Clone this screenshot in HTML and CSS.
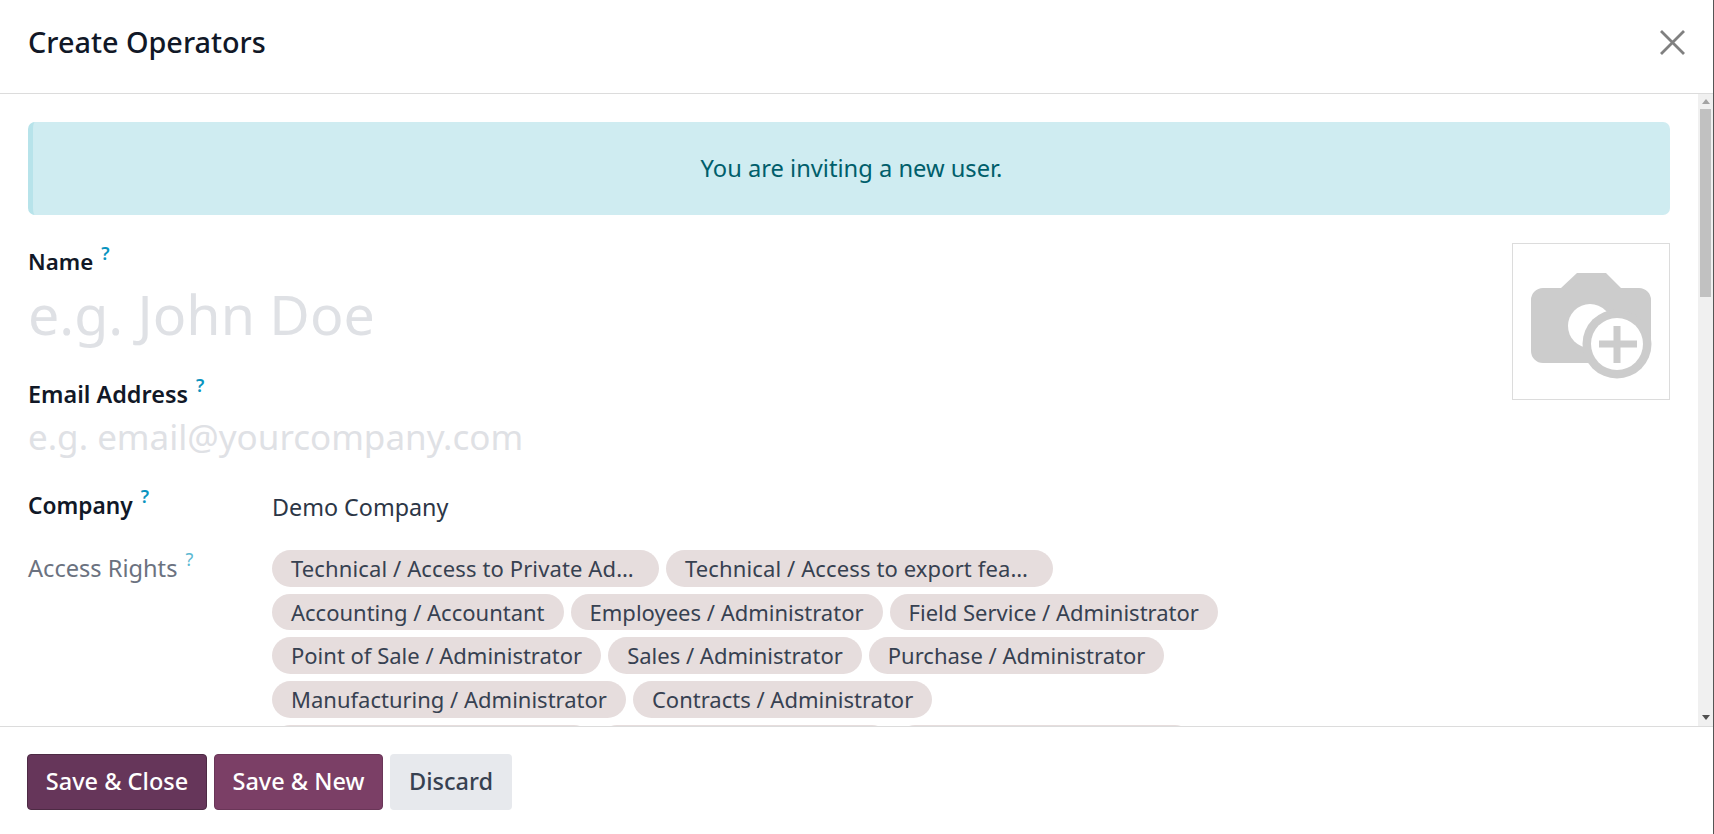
FILE: index.html
```html
<!DOCTYPE html>
<html lang="en">
<head>
<meta charset="utf-8">
<title>Create Operators</title>
<link rel="stylesheet" href="styles.css">
</head>
<body>
<div class="modal">
  <header class="modal-header">
    <h1 class="modal-title">Create Operators</h1>
    <svg class="close-icon" viewBox="0 0 25 25" aria-label="Close"><path d="M1 1L24 24M24 1L1 24"/></svg>
  </header>
  <div class="modal-middle">
    <main class="modal-body">
      <div class="alert">You are inviting a new user.</div>
      <div class="top-form">
        <div class="top-fields">
          <label class="label label-name">Name<sup class="help">?</sup></label>
          <div class="placeholder-name">e.g. John Doe</div>
          <label class="label label-email">Email Address<sup class="help">?</sup></label>
          <div class="placeholder-email">e.g. email@yourcompany.com</div>
        </div>
        <div class="image-box">
          <svg class="camera" viewBox="1513 244 156 154">
            <path class="cam-fill" d="M1531 300a12 12 0 0 1 12-12H1561L1577 273H1606L1621 288H1639a12 12 0 0 1 12 12V344H1600V363H1543a12 12 0 0 1-12-12Z"/>
            <circle class="cam-white" cx="1590" cy="326" r="22"/>
            <circle class="cam-fill" cx="1617" cy="344" r="34.5"/>
            <circle class="cam-white" cx="1617" cy="344" r="26"/>
            <path class="cam-fill" d="M1613.5 326h7v14.5H1637v7h-16.5V363h-7V347.500H1599v-7h14.500Z"/>
          </svg>
        </div>
      </div>
      <div class="row row-company">
        <label class="label row-label label-company">Company<sup class="help">?</sup></label>
        <div class="value">Demo Company</div>
      </div>
      <div class="row row-access">
        <label class="row-label label-muted">Access Rights<sup class="help help-muted">?</sup></label>
        <div class="chips">
          <span class="chip chip-long">Technical / Access to Private Ad…</span>
          <span class="chip chip-long">Technical / Access to export fea…</span>
          <span class="chip">Accounting / Accountant</span>
          <span class="chip">Employees / Administrator</span>
          <span class="chip">Field Service / Administrator</span>
          <span class="chip">Point of Sale / Administrator</span>
          <span class="chip">Sales / Administrator</span>
          <span class="chip">Purchase / Administrator</span>
          <span class="chip">Manufacturing / Administrator</span>
          <span class="chip">Contracts / Administrator</span>
          <span class="chip chip-blank-a"></span>
          <span class="chip chip-blank-b"></span>
          <span class="chip chip-blank-c"></span>
        </div>
      </div>
    </main>
    <div class="scrollbar" aria-hidden="true">
      <span class="arrow-up"></span>
      <span class="thumb"></span>
      <span class="track-rest"></span>
      <span class="arrow-down"></span>
    </div>
  </div>
  <footer class="modal-footer">
    <button class="btn btn-close">Save &amp; Close</button>
    <button class="btn btn-new">Save &amp; New</button>
    <button class="btn btn-discard">Discard</button>
  </footer>
</div>
</body>
</html>
```
FILE: styles.css
```css
* { box-sizing: border-box; }
html, body { margin: 0; height: 100%; overflow: hidden; }
body {
  background: #555;
  font-family: "Noto Sans", "Open Sans", sans-serif;
  color: #374151;
  font-size: 23px;
}
.modal {
  width: 1713px;
  height: 834px;
  background: #fff;
  display: flex;
  flex-direction: column;
}
.modal-header {
  flex: 0 0 94px;
  display: flex;
  align-items: center;
  justify-content: space-between;
  padding: 0 28px 10px;
  border-bottom: 1px solid #dcdcdc;
}
.modal-title {
  margin: 0;
  font-size: 28.8px;
  font-weight: 500;
  color: #111827;
}
.close-icon { width: 25px; height: 25px; margin-top: 2px; }
.close-icon path { stroke: #808080; stroke-width: 2.8; fill: none; }
.modal-middle { flex: 1; display: flex; min-height: 0; }
.modal-body { flex: 1; min-width: 0; overflow: hidden; padding: 28px 28px 0; }
.alert {
  height: 93px;
  display: flex;
  align-items: center;
  justify-content: center;
  padding-bottom: 2px;
  background: #cfecf1;
  border-left: 5px solid #b7e3ea;
  border-radius: 7px;
  color: #005e6b;
  font-size: 23.7px;
}
.top-form { display: flex; justify-content: space-between; height: 227px; margin-top: 28px; }
.label { font-weight: 600; color: #111827; display: block; }
.label-name { line-height: 38px; font-size: 22.3px; }
.placeholder-name { font-size: 55.5px; line-height: 66px; color: #dfe1e5; font-weight: 400; }
.label-email { line-height: 38px; margin-top: 28px; font-size: 23.4px; }
.placeholder-email { font-size: 35px; line-height: 48px; color: #dfe1e5; font-weight: 400; }
.help { color: #0a94bf; font-size: 18px; font-weight: 600; margin-left: 8px; top: -2px; position: relative; vertical-align: super; line-height: 0; }
.help-muted { color: #5cb9d2; font-weight: 400; }
.image-box { width: 158px; height: 157px; border: 1px solid #dcdcdc; display: flex; }
.camera { width: 156px; height: 154px; }
.cam-fill { fill: #cccccc; }
.cam-white { fill: #fff; }
.row { display: flex; }
.row-label { flex: 0 0 244px; }
.row-company { margin-top: 18px; line-height: 38px; }
.label-company { font-size: 22.7px; margin-top: -1px; }
.value { color: #2c3646; font-size: 23.3px; }
.row-access { margin-top: 24px; }
.label-muted { color: #6b7280; line-height: 37px; font-size: 23.6px; }
.chips { display: flex; flex-wrap: wrap; align-content: flex-start; gap: 7px; width: 968px; }
.chip {
  height: 36.67px;
  line-height: 37.67px;
  padding: 0 19px;
  border-radius: 19px;
  background: #e6dddd;
  color: #374151;
  white-space: nowrap;
  font-size: 22px;
}
.chip-long { width: 387px; letter-spacing: 0.12px; }
.chip-blank-a { width: 320px; }
.chip-blank-b { width: 291px; }
.chip-blank-c { width: 296px; }
.scrollbar { flex: 0 0 15px; background: #f0f0f0; display: flex; flex-direction: column; align-items: center; }
.arrow-up { width: 0; height: 0; margin: 5px 0 5px; border-left: 4px solid transparent; border-right: 4px solid transparent; border-bottom: 5px solid #a3a3a3; }
.thumb { width: 11px; height: 188px; background: #c1c1c1; }
.track-rest { flex: 1; }
.arrow-down { width: 0; height: 0; margin: 5px 0 6px; border-left: 4px solid transparent; border-right: 4px solid transparent; border-top: 5px solid #505050; }
.modal-footer {
  flex: 0 0 108px;
  display: flex;
  gap: 7px;
  padding: 27px 27px 0;
  border-top: 1px solid #dcdcdc;
  background: #fff;
  align-items: flex-start;
}
.btn {
  height: 56px;
  border: 1px solid transparent;
  border-radius: 4px;
  padding: 0 0 2px;
  font: 500 23.5px "Noto Sans", sans-serif;
}
.btn-close { background: #66365a; border-color: #4d2a44; color: #fff; width: 180px; }
.btn-new { background: #7b3f66; border-color: #6a3658; color: #fff; width: 169px; }
.btn-discard { background: #e7e9ed; color: #374151; width: 122px; }
```
